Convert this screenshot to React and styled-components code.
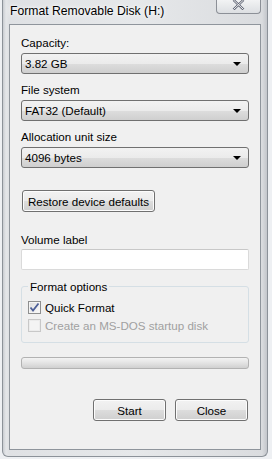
import React, { useState } from "react";
import styled, { createGlobalStyle } from "styled-components";

const GlobalStyle = createGlobalStyle`
  html, body {
    margin: 0;
    padding: 0;
    background: #eef0f3;
  }
  body {
    font-family: "Liberation Sans", Arial, sans-serif;
    font-size: 11.6px;
    color: #000;
  }
`;

function Combo({ value }) {
  return (
    <ComboBox>
      <span>{value}</span>
      <Arrow />
    </ComboBox>
  );
}

function Check({ checked, disabled, children }) {
  return (
    <CheckRow $disabled={disabled}>
      <CheckBox $disabled={disabled}>
        {checked && (
          <svg width="11" height="11" viewBox="0 0 11 11">
            <path
              d="M1.5 5.5 L4 8.5 L9.5 1.5"
              fill="none"
              stroke="#4c5e97"
              strokeWidth="1.8"
            />
          </svg>
        )}
      </CheckBox>
      {children}
    </CheckRow>
  );
}

function App() {
  const [label, setLabel] = useState("");
  return (
    <>
      <GlobalStyle />
      <Page>
        <Window>
          <TitleBar>
            <Title>Format Removable Disk (H:)</Title>
            <CloseButton>
              <svg width="13" height="10" viewBox="0 0 13 10">
                <path
                  d="M1.5 0 L11.5 9.5 M11.5 0 L1.5 9.5"
                  stroke="#5a6070"
                  strokeWidth="2.4"
                />
                <path
                  d="M1.5 0 L11.5 9.5 M11.5 0 L1.5 9.5"
                  stroke="#f4f4f4"
                  strokeWidth="1"
                />
              </svg>
            </CloseButton>
          </TitleBar>
          <Client>
            <Label>Capacity:</Label>
            <Combo value="3.82 GB" />
            <Label $top={8}>File system</Label>
            <Combo value="FAT32 (Default)" />
            <Label $top={8}>Allocation unit size</Label>
            <Combo value="4096 bytes" />
            <RestoreButton>Restore device defaults</RestoreButton>
            <Label $top={20} $bottom={2}>Volume label</Label>
            <TextInput value={label} onChange={(e) => setLabel(e.target.value)} />
            <Group>
              <Legend>Format options</Legend>
              <Check checked>Quick Format</Check>
              <Check disabled>Create an MS-DOS startup disk</Check>
            </Group>
            <Progress />
            <Footer>
              <Button>Start</Button>
              <Button>Close</Button>
            </Footer>
          </Client>
        </Window>
      </Page>
    </>
  );
}

const Page = styled.div`
  width: 272px;
  height: 459px;
  padding-left: 2px;
  box-sizing: border-box;
  overflow: hidden;
`;

const Window = styled.div`
  width: 266px;
  height: 457px;
  box-sizing: border-box;
  padding: 0 6px 6px 6px;
  display: flex;
  flex-direction: column;
  background: linear-gradient(
    90deg,
    #c9ccd1 0px,
    #e4e6e9 3px,
    #dfe1e4 6px,
    #e6e8ea 50%,
    #dadcdf calc(100% - 5px),
    #c3c6cb 100%
  );
  border: 1px solid #8c9299;
  border-top: none;
  border-radius: 0 0 6px 6px;
`;

const TitleBar = styled.div`
  height: 24px;
  display: flex;
  justify-content: space-between;
  align-items: flex-start;
`;

const Title = styled.div`
  padding-top: 4px;
  padding-left: 1px;
  font-size: 12.2px;
  color: #000;
  text-shadow: 0 0 6px #fff, 0 0 3px #fff;
`;

const CloseButton = styled.div`
  width: 45px;
  height: 14px;
  box-sizing: border-box;
  display: flex;
  justify-content: center;
  align-items: flex-start;
  border: 1px solid #8c9097;
  border-top: none;
  border-radius: 0 0 4px 4px;
  background: linear-gradient(#f2f3f4, #dcdfe2);
`;

const Client = styled.div`
  flex: 1;
  background: #f0f0f0;
  border: 1px solid #8f959c;
  padding: 10px 11px 0 11px;
  display: flex;
  flex-direction: column;
`;

const Label = styled.div`
  line-height: 15px;
  margin-top: ${(p) => p.$top || 0}px;
  margin-bottom: ${(p) => (p.$bottom === undefined ? 3 : p.$bottom)}px;
`;

const ComboBox = styled.div`
  height: 21px;
  box-sizing: border-box;
  border: 1px solid #707070;
  border-radius: 3px;
  background: linear-gradient(#f2f2f2 0%, #ebebeb 50%, #dddddd 51%, #cfcfcf 100%);
  display: flex;
  align-items: center;
  justify-content: space-between;
  padding: 0 7px 0 3px;
  line-height: 15px;
`;

const Arrow = styled.span`
  width: 0;
  height: 0;
  border-left: 4px solid transparent;
  border-right: 4px solid transparent;
  border-top: 4px solid #000;
  margin-top: 1px;
`;

const Button = styled.div`
  width: 73px;
  height: 22px;
  box-sizing: border-box;
  border: 1px solid #707070;
  border-radius: 3px;
  background: linear-gradient(#f2f2f2 0%, #ebebeb 50%, #dddddd 51%, #cfcfcf 100%);
  display: flex;
  align-items: center;
  justify-content: center;
  box-shadow: inset 0 0 0 1px #fcfcfc;
`;

const RestoreButton = styled(Button)`
  width: 133px;
  margin-top: 22px;
  margin-left: 1px;
`;

const TextInput = styled.input`
  height: 21px;
  box-sizing: border-box;
  border: 1px solid #dadada;
  border-top-color: #c8c8c8;
  border-radius: 2px;
  background: #fff;
  margin: 0;
  outline: none;
`;

const Group = styled.fieldset`
  margin: 10px 0 0 0;
  padding: 7px 0 9px 6px;
  border: 1px solid #d5dfe5;
  border-radius: 3px;
  min-inline-size: 0;
  display: flex;
  flex-direction: column;
  gap: 3px;
`;

const Legend = styled.legend`
  padding: 0 2px;
  margin-left: 0;
  line-height: 13px;
`;

const CheckRow = styled.div`
  display: flex;
  align-items: center;
  gap: 4px;
  height: 15px;
  color: ${(p) => (p.$disabled ? "#a0a0a0" : "#000")};
`;

const CheckBox = styled.span`
  width: 13px;
  height: 13px;
  box-sizing: border-box;
  border: 1px solid ${(p) => (p.$disabled ? "#c8c8c8" : "#8e8f8f")};
  background: ${(p) =>
    p.$disabled ? "#f4f4f4" : "linear-gradient(135deg, #dcdcdc, #fbfbfb)"};
  box-shadow: inset 0 0 0 1px ${(p) => (p.$disabled ? "#ececec" : "#f4f4f4")};
  display: flex;
  align-items: center;
  justify-content: center;
`;

const Progress = styled.div`
  margin-top: 14px;
  height: 12px;
  box-sizing: border-box;
  border: 1px solid #b2b2b2;
  border-radius: 3px;
  background: linear-gradient(#f3f3f3, #e3e3e3 50%, #d0d0d0);
`;

const Footer = styled.div`
  margin-top: 30px;
  display: flex;
  justify-content: flex-end;
  gap: 9px;
  padding-right: 1px;
`;

export default App;
